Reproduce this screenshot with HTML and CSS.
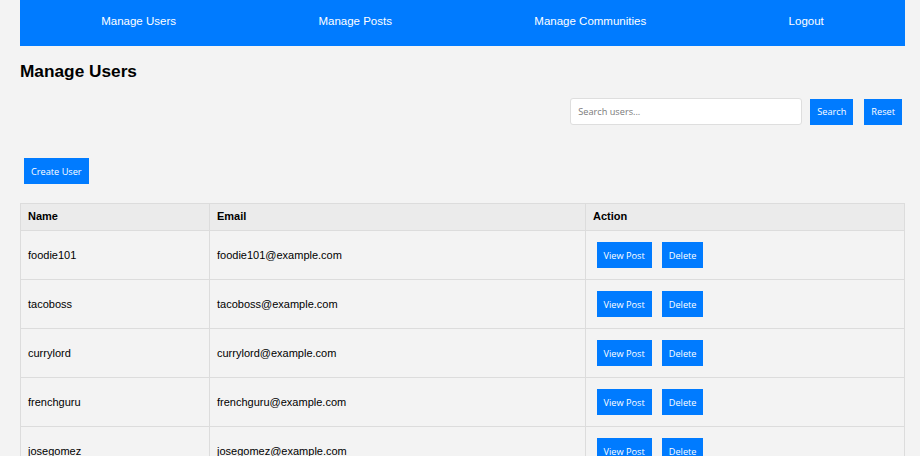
FILE: index.html
```html
<!DOCTYPE html>
<html lang="en">
<head>
<meta charset="utf-8">
<title>Manage Users</title>
<link rel="stylesheet" href="styles.css">
</head>
<body>
<div class="page">
  <nav class="nav">
    <a href="#" class="nav-link">Manage Users</a>
    <a href="#" class="nav-link">Manage Posts</a>
    <a href="#" class="nav-link">Manage Communities</a>
    <a href="#" class="nav-link">Logout</a>
  </nav>

  <h2 class="title">Manage Users</h2>

  <form class="search-row">
    <input class="search-input" type="text" placeholder="Search users...">
    <button type="button" class="btn btn-search">Search</button>
    <button type="button" class="btn btn-reset">Reset</button>
  </form>

  <div class="create-row">
    <button type="button" class="btn">Create User</button>
  </div>

  <table class="users">
    <thead>
      <tr><th class="col-name">Name</th><th class="col-email">Email</th><th>Action</th></tr>
    </thead>
    <tbody>
      <tr><td>foodie101</td><td>foodie101@example.com</td><td><button type="button" class="btn">View Post</button> <button type="button" class="btn">Delete</button></td></tr>
      <tr><td>tacoboss</td><td>tacoboss@example.com</td><td><button type="button" class="btn">View Post</button> <button type="button" class="btn">Delete</button></td></tr>
      <tr><td>currylord</td><td>currylord@example.com</td><td><button type="button" class="btn">View Post</button> <button type="button" class="btn">Delete</button></td></tr>
      <tr><td>frenchguru</td><td>frenchguru@example.com</td><td><button type="button" class="btn">View Post</button> <button type="button" class="btn">Delete</button></td></tr>
      <tr><td>josegomez</td><td>josegomez@example.com</td><td><button type="button" class="btn">View Post</button> <button type="button" class="btn">Delete</button></td></tr>
    </tbody>
  </table>
</div>
</body>
</html>
```
FILE: styles.css
```css
html, body {
  margin: 0;
  padding: 0;
  background: #f3f3f3;
}
body {
  font-family: "Liberation Sans", Arial, sans-serif;
  color: #000;
}
.page {
  padding: 0 15px 0 20px;
}
.nav {
  display: flex;
  justify-content: space-around;
  background: #007bff;
  padding: 15px 10px 18px;
}
.nav-link {
  color: #fff;
  text-decoration: none;
  font-size: 11.5px;
  line-height: 13px;
}
.title {
  font-size: 17.25px;
  font-weight: bold;
  margin: 15px 0 0;
  line-height: 20px;
}
.search-row {
  display: flex;
  justify-content: flex-end;
  align-items: center;
  margin: 17px 0 0;
  padding-right: 3px;
}
.search-input {
  width: 232px;
  height: 27px;
  box-sizing: border-box;
  border: 1px solid #dedede;
  border-radius: 3px;
  background: #fff;
  padding: 0 7px;
  font-family: "Open Sans", "DejaVu Sans", sans-serif;
  font-size: 9.2px;
  color: #333;
  margin: 0 8px 0 0;
  outline: none;
}
.search-input::placeholder {
  color: #7a7a7a;
}
.btn {
  background: #007bff;
  color: #fff;
  border: none;
  height: 26px;
  padding: 0 7px;
  font-family: "Open Sans", "DejaVu Sans", sans-serif;
  font-size: 9.2px;
  margin: 3px 3.5px;
  cursor: pointer;
  vertical-align: middle;
}
.btn-search {
  margin: 0 11px 0 0;
}
.btn-reset {
  margin: 0;
}
.create-row {
  margin-top: 30px;
}
.create-row .btn {
  margin: 3px 4px;
}
.users {
  width: 100%;
  border-collapse: collapse;
  margin-top: 16px;
  font-size: 11px;
}
.users th, .users td {
  border: 1px solid #dcdcdc;
  text-align: left;
  padding: 8px 7px;
}
.users th {
  background: #ebebeb;
  font-weight: bold;
  line-height: 11px;
  padding: 7px 7px 8px;
}
.users td {
  height: 32px;
  padding: 8px 7px;
}
.col-name {
  width: 174px;
}
.col-email {
  width: 361px;
}
```
